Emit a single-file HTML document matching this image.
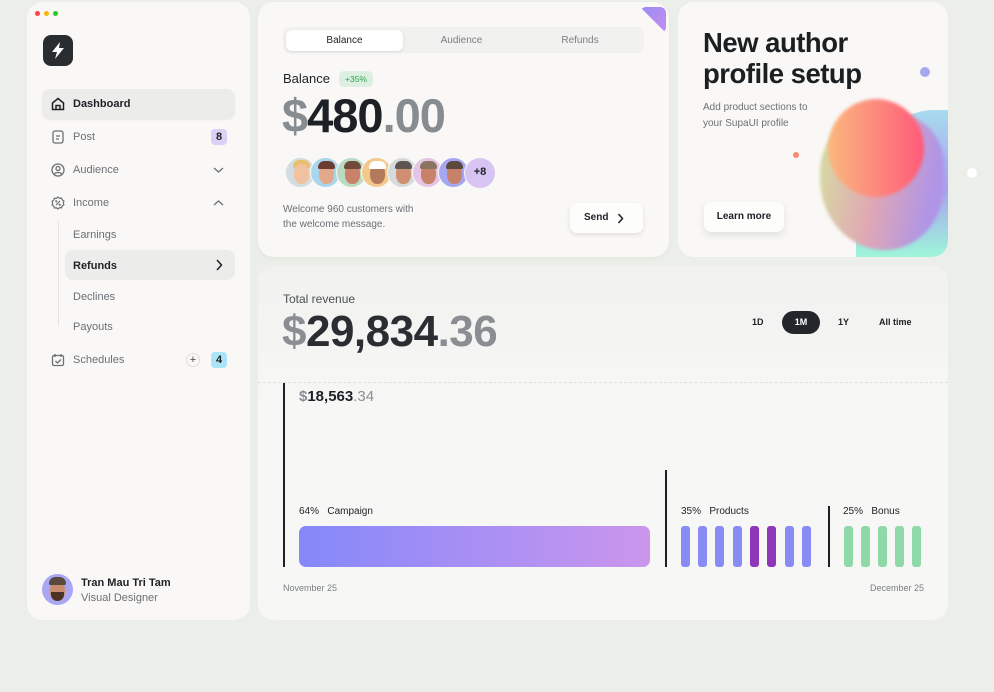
<!DOCTYPE html>
<html><head><meta charset="utf-8"><style>
*{margin:0;padding:0;box-sizing:border-box}
body{width:994px;height:692px;background:#eceee9;font-family:"Liberation Sans",sans-serif;position:relative;overflow:hidden;color:#1d2125}
.card{position:absolute;background:#f9f8f6;border-radius:16px;overflow:hidden}
.a{position:absolute}
.nav{position:absolute;left:42px;width:193px;height:30px;display:flex;align-items:center;font-size:11px;color:#6b7076}
.nav svg{position:absolute;left:9px}
.nav span{position:absolute;left:31px;top:9px}
.sub{position:absolute;left:65px;width:170px;height:30px;font-size:11px;color:#6b7076;display:flex;align-items:center;padding-left:8px;padding-top:1px}
.av{position:absolute;top:157px;width:31px;height:31px;border-radius:50%;border:1.5px solid #f9f8f6;overflow:hidden}
.av i{position:absolute;left:8px;top:6px;width:15px;height:20px;border-radius:45%;background:#c9826a}
.av b{position:absolute;left:7px;top:3px;width:17px;height:8px;border-radius:8px 8px 2px 2px}
.pb{position:absolute;top:526px;width:9px;height:41px;border-radius:3px;background:#8a8cf6}
.gb{position:absolute;top:526px;width:9px;height:41px;border-radius:3px;background:#8fd8a8}
</style></head><body>

<div class="card" style="left:27px;top:2px;width:223px;height:618px;">
  <div class="a" style="left:8px;top:9px;width:5px;height:5px;border-radius:50%;background:#f44"></div>
  <div class="a" style="left:17px;top:9px;width:5px;height:5px;border-radius:50%;background:#f5b60b"></div>
  <div class="a" style="left:26px;top:9px;width:5px;height:5px;border-radius:50%;background:#2c2"></div>
  <div class="a" style="left:16px;top:33px;width:30px;height:31px;border-radius:8px;background:#2a2d30">
    <svg width="30" height="31" viewBox="0 0 30 31"><path d="M17 7 L9 17 H14 L12 24 L21 13 H16 Z" fill="#fff"/></svg>
  </div>
</div>
<div class="nav" style="top:89px;background:#ececea;border-radius:8px;color:#1d2125;font-weight:bold;box-shadow:0 1px 2px rgba(0,0,0,.06)">
  <svg width="14" height="14" viewBox="0 0 14 14" fill="none" stroke="#1d2125" stroke-width="1.5"><path d="M1.5 6 L7 1.5 L12.5 6 V12.5 H1.5 Z"/><path d="M5 12.5 V8.5 H9 V12.5"/></svg><span>Dashboard</span></div>
<div class="nav" style="top:122px"><svg width="14" height="14" viewBox="0 0 14 14" fill="none" stroke="#6b7076" stroke-width="1.3"><rect x="2" y="1" width="10" height="12" rx="2"/><path d="M5 6h4M5 9h3"/></svg><span>Post</span>
  <div class="a" style="left:169px;top:7px;width:16px;height:16px;border-radius:4px;background:#ddd0f6;color:#222;font-size:11px;font-weight:bold;text-align:center;line-height:16px">8</div></div>
<div class="nav" style="top:155px"><svg width="14" height="14" viewBox="0 0 14 14" fill="none" stroke="#6b7076" stroke-width="1.3"><circle cx="7" cy="7" r="6"/><circle cx="7" cy="5.5" r="2"/><path d="M3.5 11c1-2 6-2 7 0"/></svg><span>Audience</span>
  <svg style="left:171px" width="11" height="8" viewBox="0 0 11 8" fill="none" stroke="#6b7076" stroke-width="1.3"><path d="M1 2l4.5 4 4.5-4"/></svg></div>
<div class="nav" style="top:188px"><svg width="14" height="14" viewBox="0 0 14 14" fill="none" stroke="#6b7076" stroke-width="1.2"><path d="M7 1l1.6 1.2 2-.2.6 1.9 1.7 1.1-.6 1.9.6 1.9-1.7 1.1-.6 1.9-2-.2L7 13l-1.6-1.2-2 .2-.6-1.9L1.1 9l.6-1.9L1.1 5.2l1.7-1.1.6-1.9 2 .2z"/><path d="M5 9l4-4"/><circle cx="5.3" cy="5.3" r=".5"/><circle cx="8.7" cy="8.7" r=".5"/></svg><span>Income</span>
  <svg style="left:171px" width="11" height="8" viewBox="0 0 11 8" fill="none" stroke="#6b7076" stroke-width="1.3"><path d="M1 6l4.5-4 4.5 4"/></svg></div>
<div class="a" style="left:58px;top:222px;width:1px;height:104px;background:#e3e3e0"></div>
<div class="sub" style="top:219px">Earnings</div>
<div class="sub" style="top:250px;background:#ececea;border-radius:8px;color:#1d2125;font-weight:bold">Refunds
  <svg class="a" style="left:150px;top:9px" width="8" height="12" viewBox="0 0 8 12" fill="none" stroke="#1d2125" stroke-width="1.5"><path d="M2 1l4.5 5L2 11"/></svg></div>
<div class="sub" style="top:281px">Declines</div>
<div class="sub" style="top:311px">Payouts</div>
<div class="nav" style="top:345px"><svg width="14" height="14" viewBox="0 0 14 14" fill="none" stroke="#6b7076" stroke-width="1.3"><rect x="1.5" y="2.5" width="11" height="10" rx="1.5"/><path d="M4 1v3M10 1v3M4.5 8l2 2 3.5-3.5"/></svg><span>Schedules</span>
  <div class="a" style="left:144px;top:8px;width:14px;height:14px;border-radius:50%;border:1px solid #ddd;font-size:11px;text-align:center;line-height:12px;color:#444">+</div>
  <div class="a" style="left:169px;top:7px;width:16px;height:16px;border-radius:4px;background:#a9e4f8;color:#222;font-size:11px;font-weight:bold;text-align:center;line-height:16px">4</div></div>
<div class="a" style="left:42px;top:574px;width:31px;height:31px;border-radius:50%;background:#a9a6f4;overflow:hidden">
  <div class="a" style="left:8px;top:7px;width:15px;height:20px;border-radius:45%;background:#c98c6e"></div>
  <div class="a" style="left:7px;top:3px;width:17px;height:8px;border-radius:8px 8px 2px 2px;background:#5a4a3d"></div>
  <div class="a" style="left:9px;top:18px;width:13px;height:9px;border-radius:0 0 7px 7px;background:#4a3226"></div>
</div>
<div class="a" style="left:81px;top:577px;font-size:11px;font-weight:bold;color:#1d2125">Tran Mau Tri Tam</div>
<div class="a" style="left:81px;top:592px;font-size:11px;color:#6b7076">Visual Designer</div>

<div class="card" style="left:258px;top:2px;width:411px;height:255px;box-shadow:0 2px 6px rgba(0,0,0,.04)">
  <div class="a" style="left:382px;top:5px;width:26px;height:26px;background:linear-gradient(135deg,#9b8cf5,#c58ef0);clip-path:polygon(0 0,100% 0,100% 100%);border-radius:6px"></div>
  <div class="a" style="left:25px;top:25px;width:361px;height:26px;border-radius:7px;background:#f1f1ef"></div>
  <div class="a" style="left:28px;top:28px;width:117px;height:21px;border-radius:6px;background:#fff;box-shadow:0 1px 3px rgba(0,0,0,.1);font-size:10px;text-align:center;line-height:21px;color:#1d2125">Balance</div>
  <div class="a" style="left:145px;top:28px;width:117px;height:21px;font-size:10px;text-align:center;line-height:21px;color:#7a7f85">Audience</div>
  <div class="a" style="left:262px;top:28px;width:120px;height:21px;font-size:10px;text-align:center;line-height:21px;color:#7a7f85">Refunds</div>
  <div class="a" style="left:25px;top:69px;font-size:13px;color:#1d2125">Balance</div>
  <div class="a" style="left:81px;top:69px;width:34px;height:16px;border-radius:5px;background:#dcefe0;color:#2fa352;font-size:8.5px;text-align:center;line-height:16px">+35%</div>
  <div class="a" style="left:24px;top:86px;font-size:47px;font-weight:bold;letter-spacing:-1px;color:#1d2125"><span style="color:#878c91">$</span>480<span style="color:#878c91">.00</span></div>
  <div class="a" style="left:25px;top:200px;font-size:10px;line-height:15px;color:#6b7076">Welcome 960 customers with<br>the welcome message.</div>
  <div class="a" style="left:312px;top:201px;width:73px;height:30px;border-radius:7px;background:#fdfdfc;box-shadow:0 2px 5px rgba(0,0,0,.1);font-size:10px;font-weight:bold;line-height:30px;padding-left:14px">Send
    <svg class="a" style="left:47px;top:10px" width="7" height="11" viewBox="0 0 7 11" fill="none" stroke="#1d2125" stroke-width="1.5"><path d="M1.5 1l4 4.5-4 4.5"/></svg></div>
</div>
<div class="av" style="left:285px;background:#d3dce0"><b style="background:#e9c06a;top:2px"></b><i style="background:#f1c1a0"></i></div>
<div class="av" style="left:310px;background:#a9d6ea"><i style="background:#e3a88a"></i><b style="background:#6b3d30"></b></div>
<div class="av" style="left:336px;background:#b9dcc0"><i></i><b style="background:#6d4a3a"></b></div>
<div class="av" style="left:361px;background:#f3c98b"><i style="background:#b47a5e"></i><b style="background:#fff"></b></div>
<div class="av" style="left:387px;background:#d5dadc"><i style="background:#d08f73"></i><b style="background:#5f5450"></b></div>
<div class="av" style="left:412px;background:#e6c4e6"><i></i><b style="background:#8a7460"></b></div>
<div class="av" style="left:438px;background:#a5a7f3"><i></i><b style="background:#5a4a3d"></b></div>
<div class="a" style="left:464px;top:157px;width:32px;height:32px;border-radius:50%;background:#d8c4f3;border:1.5px solid #f9f8f6;font-size:11px;font-weight:bold;text-align:center;line-height:29px">+8</div>

<div class="card" style="left:678px;top:2px;width:270px;height:255px">
  <div class="a" style="left:178px;top:108px;width:130px;height:170px;border-radius:60% 0 0 0;background:linear-gradient(180deg,#a8dcee,#a7a0f0 45%,#9ef3da 85%)"></div>
  <div class="a" style="left:142px;top:112px;width:124px;height:136px;border-radius:45% 40% 50% 55%;background:linear-gradient(100deg,#d6e0a0 0%,#e0a8b4 45%,#b095e6 85%);filter:blur(1.5px)"></div>
  <div class="a" style="left:150px;top:97px;width:96px;height:98px;border-radius:50%;background:linear-gradient(90deg,#fbb87e,#ff5a7a);filter:blur(1.5px)"></div>
  <div class="a" style="left:25px;top:25px;font-size:27.5px;font-weight:bold;line-height:31px;letter-spacing:-.5px;color:#1b1f22">New author<br>profile setup</div>
  <div class="a" style="left:25px;top:98px;font-size:10px;line-height:16px;color:#6b7076">Add product sections to<br>your SupaUI profile</div>
  <div class="a" style="left:242px;top:65px;width:10px;height:10px;border-radius:50%;background:#a7a9f0"></div>
  <div class="a" style="left:115px;top:150px;width:6px;height:6px;border-radius:50%;background:#f88a70"></div>
  <div class="a" style="left:26px;top:200px;width:80px;height:30px;border-radius:7px;background:#fdfdfc;box-shadow:0 3px 8px rgba(0,0,0,.1);font-size:10px;font-weight:bold;text-align:center;line-height:30px">Learn more</div>
</div>
<div class="a" style="left:967px;top:168px;width:10px;height:10px;border-radius:50%;background:#fff"></div>

<div class="card" style="left:258px;top:265px;width:690px;height:355px;background:linear-gradient(180deg,#f1f1ef,#f7f7f5 40%)">
  <div class="a" style="left:25px;top:27px;font-size:12px;color:#4a4f55">Total revenue</div>
  <div class="a" style="left:24px;top:42px;font-size:44px;font-weight:bold;letter-spacing:-.5px;color:#2a2e33"><span style="color:#8a8e93">$</span>29,834<span style="color:#8a8e93">.36</span></div>
  <div class="a" style="left:494px;top:52px;font-size:9px;font-weight:bold">1D</div>
  <div class="a" style="left:524px;top:46px;width:38px;height:23px;border-radius:12px;background:#23272b;color:#fff;font-size:9px;font-weight:bold;text-align:center;line-height:23px">1M</div>
  <div class="a" style="left:580px;top:52px;font-size:9px;font-weight:bold">1Y</div>
  <div class="a" style="left:621px;top:52px;font-size:9px;font-weight:bold">All time</div>
  <div class="a" style="left:0;top:117px;width:690px;border-top:1px dashed #e1e1de"></div>
  <div class="a" style="left:25px;top:118px;width:1.5px;height:184px;background:#1d2125"></div>
  <div class="a" style="left:41px;top:123px;font-size:15px;font-weight:bold;color:#1d2125"><span style="color:#8a8e93">$</span>18,563<span style="color:#8a8e93;font-weight:normal">.34</span></div>
  <div class="a" style="left:41px;top:241px;font-size:10px;color:#1d2125">64% &nbsp; Campaign</div>
  <div class="a" style="left:41px;top:261px;width:351px;height:41px;border-radius:7px;background:linear-gradient(90deg,#8588f9,#b291f2 65%,#cb96ec)"></div>
  <div class="a" style="left:407px;top:205px;width:1.5px;height:97px;background:#1d2125"></div>
  <div class="a" style="left:423px;top:241px;font-size:10px;color:#1d2125">35% &nbsp; Products</div>
  <div class="a" style="left:570px;top:241px;width:1.5px;height:61px;background:#1d2125"></div>
  <div class="a" style="left:585px;top:241px;font-size:10px;color:#1d2125">25% &nbsp; Bonus</div>
  <div class="a" style="left:25px;top:318px;font-size:9px;color:#7a7f85">November 25</div>
  <div class="a" style="left:612px;top:318px;font-size:9px;color:#7a7f85">December 25</div>
</div>
<div class="pb" style="left:681px"></div><div class="pb" style="left:698px"></div><div class="pb" style="left:715px"></div><div class="pb" style="left:733px"></div>
<div class="pb" style="left:750px;background:#9036b8"></div><div class="pb" style="left:767px;background:#9036b8"></div><div class="pb" style="left:785px"></div><div class="pb" style="left:802px"></div>
<div class="gb" style="left:844px"></div><div class="gb" style="left:861px"></div><div class="gb" style="left:878px"></div><div class="gb" style="left:895px"></div><div class="gb" style="left:912px"></div>
</body></html>
